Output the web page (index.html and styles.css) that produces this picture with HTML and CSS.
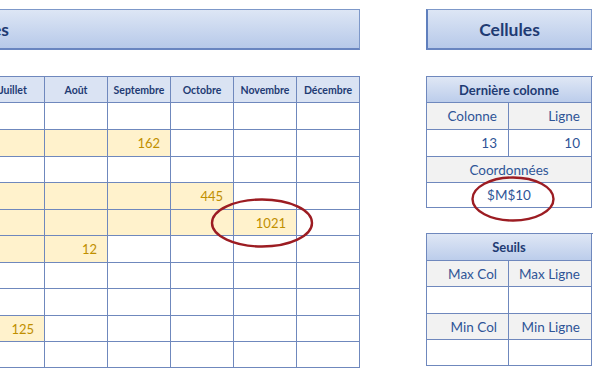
FILE: index.html
```html
<!DOCTYPE html>
<html lang="fr">
<head>
<meta charset="utf-8">
<title>Cellules</title>
<link rel="stylesheet" href="styles.css">
</head>
<body>
<div class="page">
  <section class="left">
    <div class="title title-left"><span>Données</span></div>
    <div class="grid months">
      <div class="h">Janvier</div><div class="h">Février</div><div class="h">Mars</div><div class="h">Avril</div><div class="h">Mai</div><div class="h">Juin</div>
      <div class="h">Juillet</div><div class="h">Août</div><div class="h">Septembre</div><div class="h">Octobre</div><div class="h">Novembre</div><div class="h">Décembre</div>
      <!-- row 1 -->
      <div></div><div></div><div></div><div></div><div></div><div></div><div></div><div></div><div></div><div></div><div></div><div></div>
      <!-- row 2 -->
      <div class="y"></div><div class="y"></div><div class="y"></div><div class="y"></div><div class="y"></div><div class="y"></div><div class="y"></div><div class="y"></div><div class="y n">162</div><div></div><div></div><div></div>
      <!-- row 3 -->
      <div></div><div></div><div></div><div></div><div></div><div></div><div></div><div></div><div></div><div></div><div></div><div></div>
      <!-- row 4 -->
      <div class="y"></div><div class="y"></div><div class="y"></div><div class="y"></div><div class="y"></div><div class="y"></div><div class="y"></div><div class="y"></div><div class="y"></div><div class="y n">445</div><div></div><div></div>
      <!-- row 5 -->
      <div class="y"></div><div class="y"></div><div class="y"></div><div class="y"></div><div class="y"></div><div class="y"></div><div class="y"></div><div class="y"></div><div class="y"></div><div class="y"></div><div class="y n">1021</div><div></div>
      <!-- row 6 -->
      <div class="y"></div><div class="y"></div><div class="y"></div><div class="y"></div><div class="y"></div><div class="y"></div><div class="y"></div><div class="y n">12</div><div></div><div></div><div></div><div></div>
      <!-- row 7 -->
      <div></div><div></div><div></div><div></div><div></div><div></div><div></div><div></div><div></div><div></div><div></div><div></div>
      <!-- row 8 -->
      <div></div><div></div><div></div><div></div><div></div><div></div><div></div><div></div><div></div><div></div><div></div><div></div>
      <!-- row 9 -->
      <div class="y"></div><div class="y"></div><div class="y"></div><div class="y"></div><div class="y"></div><div class="y"></div><div class="y n">125</div><div></div><div></div><div></div><div></div><div></div>
      <!-- row 10 -->
      <div></div><div></div><div></div><div></div><div></div><div></div><div></div><div></div><div></div><div></div><div></div><div></div>
      <svg class="ring ring-left" width="106" height="52" viewBox="0 0 106 52"><ellipse cx="53" cy="26" rx="50" ry="23.5" fill="none" stroke="#9c1c22" stroke-width="2.4"/></svg>
    </div>
  </section>

  <section class="right">
    <div class="title"><span>Cellules</span></div>
    <div class="grid small last">
      <div class="hs span">Dernière colonne</div>
      <div class="g r">Colonne</div><div class="g r">Ligne</div>
      <div class="r">13</div><div class="r">10</div>
      <div class="g c span">Coordonnées</div>
      <div class="c span">$M$10</div>
      <svg class="ring ring-right" width="86" height="48" viewBox="0 0 86 48"><ellipse cx="43" cy="24" rx="40.5" ry="21.5" fill="none" stroke="#9c1c22" stroke-width="2.4"/></svg>
    </div>
    <div class="grid small seuils">
      <div class="hs span">Seuils</div>
      <div class="g r">Max Col</div><div class="g r">Max Ligne</div>
      <div></div><div></div>
      <div class="g r">Min Col</div><div class="g r">Min Ligne</div>
      <div></div><div></div>
    </div>
  </section>
</div>
</body>
</html>
```

FILE: styles.css
```css
html, body {
  margin: 0;
  padding: 0;
  background: #ffffff;
}
body {
  width: 600px;
  height: 383px;
  overflow: hidden;
  font-family: Lato, "Open Sans", sans-serif;
  color: #2f5597;
}
.page {
  display: flex;
  align-items: flex-start;
  gap: 66px;
  margin-left: -397px;
  padding-top: 9px;
}
.left {
  width: 757px;
  display: flex;
  flex-direction: column;
  gap: 26px;
}
.right {
  width: 166px;
  display: flex;
  flex-direction: column;
}
.title {
  box-sizing: border-box;
  height: 41px;
  border: 1px solid #7d98c9;
  border-left: 2px solid #5f7fbd;
  border-bottom: 2px solid #6985c0;
  background: linear-gradient(#dde6f5, #b7c9e9);
  display: flex;
  align-items: center;
  justify-content: center;
  font-weight: 700;
  font-size: 17.5px;
  color: #1f3b73;
}
.title-left {
  justify-content: flex-end;
  padding-right: 350px;
}
.grid {
  position: relative;
  display: grid;
  border-top: 1px solid #6f88bd;
  border-left: 1px solid #6f88bd;
}
.grid > div {
  border-right: 1px solid #6f88bd;
  border-bottom: 1px solid #6f88bd;
  display: flex;
  align-items: center;
  overflow: hidden;
  white-space: nowrap;
}
.months {
  grid-template-columns: repeat(12, 63px);
  grid-template-rows: 26px 27px 27px 26px 27px 26px 27px 26px 27px 26px 26px;
  width: 756px;
}
.months > .h {
  background: #dae3f3;
  color: #1f3b73;
  font-weight: 700;
  font-size: 10.5px;
  justify-content: center;
}
.y {
  background: #fff2cc;
}
.n {
  justify-content: flex-end;
  padding-right: 10px;
  color: #bf8f00;
  font-size: 13px;
}
.small {
  grid-template-columns: 82px 83px;
  width: 166px;
}
.last {
  margin-top: 26px;
  grid-template-rows: 26px 27px 27px 26px 25px;
}
.seuils {
  margin-top: 25px;
  grid-template-rows: 27px 26px 27px 26px 26px;
}
.small > div {
  font-size: 13.5px;
}
.small > .hs {
  background: linear-gradient(#dfe7f5, #bccdeb);
  color: #1f3b73;
  font-weight: 700;
  justify-content: center;
  font-size: 13px;
}
.span {
  grid-column: 1 / span 2;
}
.g {
  background: #f2f2f2;
}
.r {
  justify-content: flex-end;
  padding-right: 11px;
}
.c {
  justify-content: center;
}
.ring {
  position: absolute;
  pointer-events: none;
}
.ring-left {
  left: 605px;
  top: 120px;
}
.ring-right {
  left: 43px;
  top: 98px;
}
```
